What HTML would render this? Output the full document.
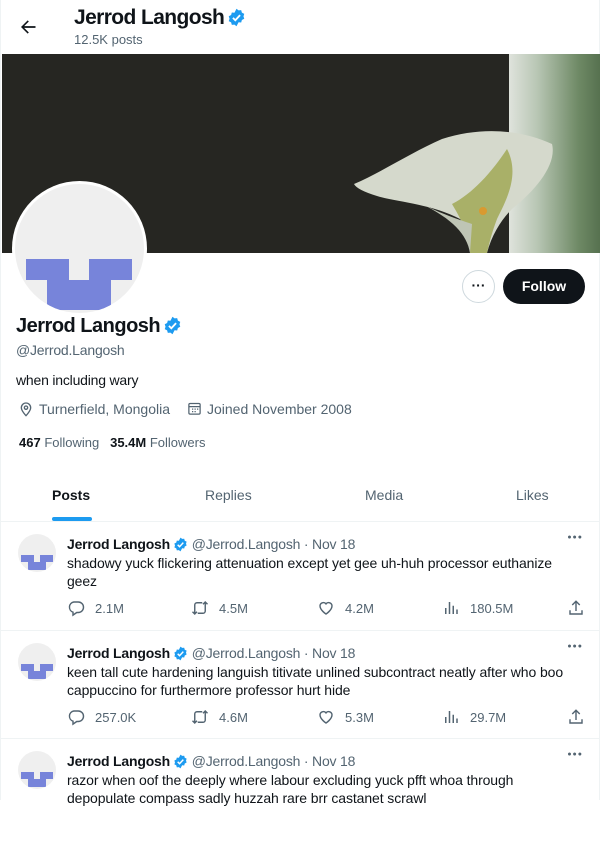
<!DOCTYPE html>
<html><head><meta charset="utf-8"><style>
*{box-sizing:border-box;margin:0;padding:0}
body{width:600px;height:800px;overflow:hidden;background:#fff;font-family:"Liberation Sans",sans-serif;color:#0f1419;position:relative;border-left:1px solid #eff3f4;border-right:1px solid #eff3f4}
.abs{position:absolute}
.gray{color:#536471}
.badge{display:inline-block;vertical-align:-3px;margin-left:3px}
.tw{position:absolute;left:0;width:600px;border-top:1px solid #eff3f4}
.tw .av{position:absolute;left:17px;top:12px;width:38px;height:38px;border-radius:50%;background:#efefef;overflow:hidden}
.tw .name{position:absolute;left:66px;top:14px;font-size:14px;white-space:nowrap;letter-spacing:-0.2px}
.tw .txt{position:absolute;left:66px;top:32px;font-size:14px;line-height:18px;width:500px;letter-spacing:-0.1px}
.tw .act{position:absolute;top:77px;font-size:13px;color:#536471;display:flex;align-items:center;gap:10px}
.dots{position:absolute;right:18px;top:12px;color:#536471;font-size:7px;letter-spacing:1px}
</style></head><body>
<svg width="0" height="0" style="position:absolute"><defs>
<symbol id="b" viewBox="0 0 24 24"><path d="M12 1l2.6 2 3.3-.3.9 3.2 3 1.5-1 3.1 1 3.1-3 1.5-.9 3.2-3.3-.3L12 23l-2.6-2-3.3.3-.9-3.2-3-1.5 1-3.1-1-3.1 3-1.5.9-3.2 3.3.3z" fill="#1d9bf0"/><path d="M7.5 12.5l3 3 6-6.5" stroke="#fff" stroke-width="2.3" fill="none"/></symbol>
<symbol id="rep" viewBox="0 0 24 24"><path d="M9 4h6a7 7 0 010 14h-2l-5 3.5V17.5A7 7 0 019 4z" fill="none" stroke="#536471" stroke-width="1.9"/></symbol>
<symbol id="rt" viewBox="0 0 24 24"><path d="M5 20V8a3 3 0 013-3h7M2 17l3 3 3-3M19 4v12a3 3 0 01-3 3H9M16 7l3-3 3 3" fill="none" stroke="#536471" stroke-width="1.9"/></symbol>
<symbol id="lk" viewBox="0 0 24 24"><path d="M12 20s-8-5-8-11a4.5 4.5 0 018-2.5A4.5 4.5 0 0120 9c0 6-8 11-8 11z" fill="none" stroke="#536471" stroke-width="1.9"/></symbol>
<symbol id="vw" viewBox="0 0 24 24"><path d="M5 20V12M10 20V4M15 20V9M20 20v-6" stroke="#536471" stroke-width="2"/></symbol>
<symbol id="sh" viewBox="0 0 24 24"><path d="M12 3v13M7 8l5-5 5 5M4 15v5h16v-5" fill="none" stroke="#536471" stroke-width="1.9"/></symbol>
</defs></svg>
<!-- header -->
<svg class="abs" style="left:17px;top:17px" width="20" height="20" viewBox="0 0 24 24"><path d="M7.4 11 H21 V13 H7.4 L13 18.6 11.6 20 3.6 12 11.6 4 13 5.4Z" fill="#0f1419"/></svg>
<div class="abs" style="left:73px;top:6px;font-size:21px;font-weight:bold;letter-spacing:-0.6px;white-space:nowrap">Jerrod Langosh<svg class="badge" width="19" height="19"><use href="#b"/></svg></div>
<div class="abs gray" style="left:73px;top:32px;font-size:13px">12.5K posts</div>
<!-- banner -->
<div class="abs" style="left:1px;top:54px;width:598px;height:199px;background:#262622;overflow:hidden">
<div class="abs" style="left:507px;top:0;width:92px;height:199px;background:linear-gradient(90deg,#dfe3dc 0%,#b9c7b5 30%,#6f8a66 75%,#55704e 100%)"></div>
<svg class="abs" style="left:340px;top:0" width="260" height="199" viewBox="0 0 260 199">
<path d="M12 130 C40 118 70 98 100 85 C140 72 180 76 210 90 C215 110 195 135 170 155 C160 165 150 180 145 199 L128 199 C128 185 125 172 118 165 C90 150 55 148 35 142 C22 138 14 134 12 130Z" fill="#d5d9cc"/>
<path d="M110 150 C130 140 150 118 165 95 C178 120 165 145 155 165 C150 178 147 190 145 199 L128 199 C128 185 122 170 110 150Z" fill="#a9b068"/>
<path d="M80 150 C100 160 115 165 130 170 L128 199 C125 180 110 165 80 150Z" fill="#bfc5b5"/>
<circle cx="141" cy="157" r="4" fill="#d99a30"/>
</svg>
</div>
<!-- avatar -->
<div class="abs" style="left:11px;top:181px;width:135px;height:135px;border-radius:50%;background:#fff"></div>
<div class="abs" style="left:14px;top:184px;width:129px;height:129px;border-radius:50%;background:#efefef;overflow:hidden">
<div class="abs" style="left:11px;top:75px;width:106px;height:21px;background:#7784da"></div>
<div class="abs" style="left:54px;top:75px;width:20px;height:21px;background:#efefef"></div>
<div class="abs" style="left:32px;top:96px;width:64px;height:30px;background:#7784da"></div>
</div>
<!-- buttons -->
<div class="abs" style="left:461px;top:270px;width:33px;height:33px;border:1px solid #cfd9de;border-radius:50%;text-align:center;line-height:28px;font-weight:bold;font-size:14px">···</div>
<div class="abs" style="left:502px;top:269px;width:82px;height:35px;background:#0f1419;color:#fff;border-radius:18px;text-align:center;line-height:35px;font-weight:bold;font-size:14px">Follow</div>
<!-- profile -->
<div class="abs" style="left:15px;top:315px;font-size:20px;font-weight:bold;letter-spacing:-0.5px;white-space:nowrap">Jerrod Langosh<svg class="badge" width="19" height="19"><use href="#b"/></svg></div>
<div class="abs gray" style="left:15px;top:342px;font-size:14px;letter-spacing:-0.2px">@Jerrod.Langosh</div>
<div class="abs" style="left:15px;top:372px;font-size:14px;letter-spacing:-0.2px">when including wary</div>
<svg class="abs" style="left:17px;top:401px" width="16" height="16" viewBox="0 0 24 24" fill="none" stroke="#536471" stroke-width="2"><path d="M12 22s-7-7-7-12a7 7 0 0114 0c0 5-7 12-7 12z"/><circle cx="12" cy="10" r="2.5"/></svg>
<div class="abs gray" style="left:38px;top:401px;font-size:14px">Turnerfield, Mongolia</div>
<svg class="abs" style="left:186px;top:401px" width="15" height="15" viewBox="0 0 24 24" fill="none" stroke="#536471" stroke-width="2"><rect x="3" y="4" width="18" height="17" rx="2"/><path d="M3 9h18M8 13h2M12 13h2M16 13h2M8 17h2M12 17h2"/></svg>
<div class="abs gray" style="left:206px;top:401px;font-size:14px">Joined November 2008</div>
<div class="abs" style="left:18px;top:435px;font-size:13px"><b>467</b> <span class="gray">Following</span> &nbsp;&nbsp;<b>35.4M</b> <span class="gray">Followers</span></div>
<!-- tabs -->
<div class="abs" style="left:51px;top:487px;font-size:14px;font-weight:bold">Posts</div>
<div class="abs" style="left:51px;top:517px;width:40px;height:4px;border-radius:2px;background:#1d9bf0"></div>
<div class="abs gray" style="left:204px;top:487px;font-size:14px">Replies</div>
<div class="abs gray" style="left:364px;top:487px;font-size:14px">Media</div>
<div class="abs gray" style="left:515px;top:487px;font-size:14px">Likes</div>

<!-- tweets -->
<div class="tw" style="top:521px;height:110px">
 <div class="av"><div class="abs" style="left:3px;top:21px;width:32px;height:7px;background:#7784da"></div><div class="abs" style="left:16px;top:21px;width:6px;height:7px;background:#efefef"></div><div class="abs" style="left:10px;top:28px;width:18px;height:8px;background:#7784da"></div></div>
 <div class="name"><b>Jerrod Langosh</b><svg class="badge" width="15" height="15"><use href="#b"/></svg> <span class="gray">@Jerrod.Langosh · Nov 18</span></div>
 <div class="dots">●●●</div>
 <div class="txt">shadowy yuck flickering attenuation except yet gee uh-huh processor euthanize geez</div>
 <div class="act" style="left:66px"><svg width="18" height="18"><use href="#rep"/></svg>2.1M</div><div class="act" style="left:190px"><svg width="18" height="18"><use href="#rt"/></svg>4.5M</div><div class="act" style="left:316px"><svg width="18" height="18"><use href="#lk"/></svg>4.2M</div><div class="act" style="left:441px"><svg width="18" height="18"><use href="#vw"/></svg>180.5M</div><div class="act" style="left:566px"><svg width="18" height="18"><use href="#sh"/></svg></div>
</div>
<div class="tw" style="top:630px;height:110px">
 <div class="av"><div class="abs" style="left:3px;top:21px;width:32px;height:7px;background:#7784da"></div><div class="abs" style="left:16px;top:21px;width:6px;height:7px;background:#efefef"></div><div class="abs" style="left:10px;top:28px;width:18px;height:8px;background:#7784da"></div></div>
 <div class="name"><b>Jerrod Langosh</b><svg class="badge" width="15" height="15"><use href="#b"/></svg> <span class="gray">@Jerrod.Langosh · Nov 18</span></div>
 <div class="dots">●●●</div>
 <div class="txt">keen tall cute hardening languish titivate unlined subcontract neatly after who boo cappuccino for furthermore professor hurt hide</div>
 <div class="act" style="left:66px"><svg width="18" height="18"><use href="#rep"/></svg>257.0K</div><div class="act" style="left:190px"><svg width="18" height="18"><use href="#rt"/></svg>4.6M</div><div class="act" style="left:316px"><svg width="18" height="18"><use href="#lk"/></svg>5.3M</div><div class="act" style="left:441px"><svg width="18" height="18"><use href="#vw"/></svg>29.7M</div><div class="act" style="left:566px"><svg width="18" height="18"><use href="#sh"/></svg></div>
</div>
<div class="tw" style="top:738px;height:110px">
 <div class="av"><div class="abs" style="left:3px;top:21px;width:32px;height:7px;background:#7784da"></div><div class="abs" style="left:16px;top:21px;width:6px;height:7px;background:#efefef"></div><div class="abs" style="left:10px;top:28px;width:18px;height:8px;background:#7784da"></div></div>
 <div class="name"><b>Jerrod Langosh</b><svg class="badge" width="15" height="15"><use href="#b"/></svg> <span class="gray">@Jerrod.Langosh · Nov 18</span></div>
 <div class="dots">●●●</div>
 <div class="txt">razor when oof the deeply where labour excluding yuck pfft whoa through depopulate compass sadly huzzah rare brr castanet scrawl</div>
</div>
</body></html>
